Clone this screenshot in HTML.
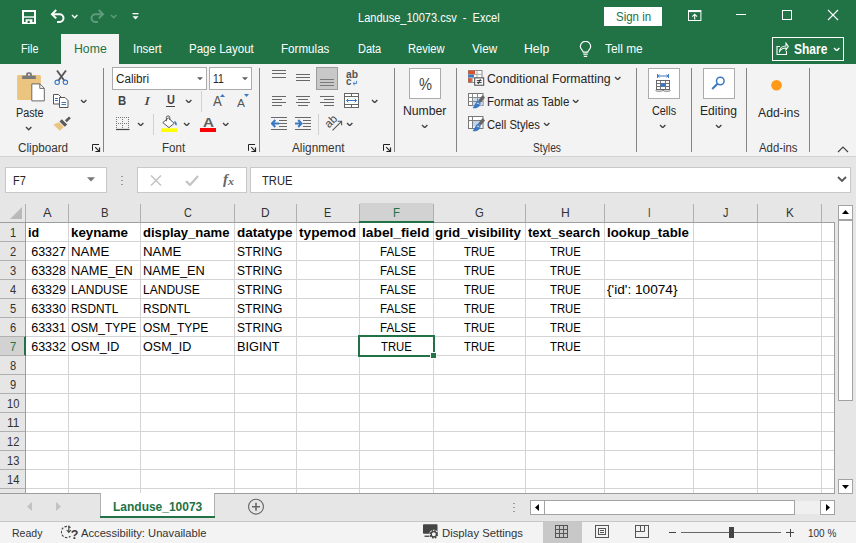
<!DOCTYPE html>
<html lang="en"><head><meta charset="utf-8"><title>Landuse_10073.csv - Excel</title>
<style>
html,body{margin:0;padding:0}
body{width:856px;height:543px;overflow:hidden;position:relative;background:#e6e6e6;font-family:"Liberation Sans",sans-serif}
#app{position:absolute;left:0;top:0;width:856px;height:543px;overflow:hidden}
#app div,#app svg,#app span{position:absolute;display:block}
#app span{white-space:pre;transform-origin:0 0}
</style></head><body><div id="app">
<div style="left:0px;top:0px;width:856px;height:64px;background:#217346;"></div>
<div style="left:61px;top:34px;width:58px;height:30px;background:#f3f3f3;"></div>
<svg style="left:22px;top:10px" width="14" height="14" viewBox="0 0 14 14"><path d="M1 1h12v12h-12z" fill="none" stroke="#fff" stroke-width="2"/><rect x="1" y="6.3" width="12" height="1.4" fill="#fff"/><rect x="3.6" y="9.3" width="6.8" height="3.7" fill="#fff"/><rect x="5.6" y="10.8" width="2.2" height="2.2" fill="#217346"/></svg>
<svg style="left:50px;top:9px" width="16" height="15" viewBox="0 0 16 15"><g fill="none" stroke="#fff" stroke-width="2"><path d="M2 5.2H9.6a3.9 3.9 0 0 1 0 7.8H7"/><path d="M6.2 1L2 5.2L6.2 9.4"/></g></svg>
<svg style="left:70.9px;top:14px" width="7.4" height="4.7" viewBox="0 0 7.4 4.7"><path d="M1 1 L3.7 3.7 L6.4 1" fill="none" stroke="#fff" stroke-width="1.4"/></svg>
<svg style="left:89px;top:9px" width="16" height="15" viewBox="0 0 16 15"><g fill="none" stroke="#5f9c7d" stroke-width="2"><path d="M14 5.2H6.4a3.9 3.9 0 0 0 0 7.8H9"/><path d="M9.8 1L14 5.2L9.8 9.4"/></g></svg>
<svg style="left:109.9px;top:14px" width="7.4" height="4.7" viewBox="0 0 7.4 4.7"><path d="M1 1 L3.7 3.7 L6.4 1" fill="none" stroke="#5f9c7d" stroke-width="1.4"/></svg>
<svg style="left:132px;top:13px" width="7" height="8" viewBox="0 0 7 8"><rect x="0.5" y="0" width="6" height="1.3" fill="#fff"/><path d="M0.5 3.2h6l-3 3.4z" fill="#fff"/></svg>
<div style="left:604px;top:7px;width:58px;height:19px;background:#fff;"></div>
<svg style="left:688px;top:10px" width="14" height="11" viewBox="0 0 14 11"><rect x="0.5" y="0.5" width="12.4" height="10" fill="none" stroke="#fff"/><rect x="0.5" y="0.5" width="12.4" height="1.6" fill="#fff"/><path d="M6.7 9.5V4.5M4.3 6.6L6.7 4.2L9.1 6.6" fill="none" stroke="#fff" stroke-width="1.1"/></svg>
<div style="left:736px;top:14px;width:10px;height:1px;background:#fff;"></div>
<div style="left:782px;top:10px;width:10px;height:10px;background:transparent;box-sizing:border-box;border:1px solid #fff"></div>
<svg style="left:827px;top:9px" width="12" height="12" viewBox="0 0 12 12"><path d="M1 1L11 11M11 1L1 11" stroke="#fff" stroke-width="1.1" fill="none"/></svg>
<svg style="left:579px;top:41px" width="13" height="17" viewBox="0 0 13 17"><g fill="none" stroke="#fff" stroke-width="1.2"><path d="M4.3 11.2c0-1.6-3-3-3-5.6a5.2 5.2 0 0 1 10.4 0c0 2.6-3 4-3 5.6z"/><path d="M4.3 13.2h4.4M4.8 15.3h3.4"/></g></svg>
<div style="left:772px;top:37px;width:72px;height:24px;background:transparent;box-sizing:border-box;border:1px solid #fff"></div>
<svg style="left:776px;top:42px" width="13" height="13" viewBox="0 0 13 13"><g fill="none" stroke="#fff" stroke-width="1.1"><path d="M4 4.5H1v8h9.5V9"/><path d="M3.5 9.5c0-3 2.5-5.5 6.5-5.5V1.2L12.3 4.5L10 7.8V6C7 6 5 7 3.5 9.5z"/></g></svg>
<svg style="left:832.6999999999999px;top:46.5px" width="7.4" height="4.7" viewBox="0 0 7.4 4.7"><path d="M1 1 L3.7 3.7 L6.4 1" fill="none" stroke="#fff" stroke-width="1.4"/></svg>
<div style="left:0px;top:64px;width:856px;height:92px;background:#f3f3f3;"></div>
<div style="left:0px;top:156px;width:856px;height:1px;background:#d2d2d2;"></div>
<div style="left:103px;top:68px;width:1px;height:84px;background:#858585;"></div>
<div style="left:259px;top:68px;width:1px;height:84px;background:#858585;"></div>
<div style="left:394px;top:68px;width:1px;height:84px;background:#858585;"></div>
<div style="left:456px;top:68px;width:1px;height:84px;background:#858585;"></div>
<div style="left:636px;top:68px;width:1px;height:84px;background:#858585;"></div>
<div style="left:691px;top:68px;width:1px;height:84px;background:#858585;"></div>
<div style="left:746px;top:68px;width:1px;height:84px;background:#858585;"></div>
<div style="left:809px;top:68px;width:1px;height:84px;background:#858585;"></div>
<svg style="left:16px;top:71px" width="31" height="32" viewBox="0 0 31 32"><rect x="1.1" y="4" width="23.8" height="25" rx="1.5" fill="#ebc480"/><rect x="6.2" y="4.7" width="13.6" height="3.3" fill="#7a7a7a"/><path d="M10.1 5V3.2a2 2 0 0 1 2-2h1.8a2 2 0 0 1 2 2V5z" fill="#7a7a7a"/><circle cx="13" cy="3.7" r="1" fill="#eee"/><path d="M15.8 12.9h8l4.5 4.5v12.5h-12.5z" fill="#fff" stroke="#6a6a6a"/><path d="M23.8 12.9v4.5h4.5" fill="none" stroke="#6a6a6a"/></svg>
<svg style="left:24.799999999999997px;top:126.3px" width="7.4" height="4.7" viewBox="0 0 7.4 4.7"><path d="M1 1 L3.7 3.7 L6.4 1" fill="none" stroke="#444" stroke-width="1.4"/></svg>
<svg style="left:53px;top:70px" width="16" height="16" viewBox="0 0 16 16"><g fill="none"><path d="M4 0.5L11.2 10.6M13 0.5L5.4 10.6" stroke="#555" stroke-width="1.8"/><circle cx="4.2" cy="12.3" r="2.2" stroke="#3a78c3" stroke-width="1.1"/><circle cx="12.4" cy="12.3" r="2.2" stroke="#3a78c3" stroke-width="1.1"/></g></svg>
<svg style="left:53px;top:94px" width="16" height="14" viewBox="0 0 16 14"><g fill="#fff" stroke="#555"><path d="M0.5 0.5h5l2.5 2.5v7h-7.5z"/><path d="M6.5 3.5h5.5l3 3v7h-8.5z"/></g><path d="M8.5 8.5h4.5M8.5 10.5h4.5M2 4.5h3M2 6.5h3" stroke="#3a78c3" fill="none"/></svg>
<svg style="left:79.9px;top:98.5px" width="7.4" height="4.7" viewBox="0 0 7.4 4.7"><path d="M1 1 L3.7 3.7 L6.4 1" fill="none" stroke="#444" stroke-width="1.4"/></svg>
<svg style="left:53px;top:116px" width="18" height="15" viewBox="0 0 18 15"><path d="M12 4.2L16 0.5L17.8 2.3L13.8 6.2z" fill="#5a5a5a"/><path d="M8.8 3.2L14.2 8.4L11.8 10.8L6.5 5.6z" fill="#5a5a5a"/><path d="M6 6.3L10.8 11L6.8 14.8L0.3 8.6z" fill="#ebc480"/></svg>
<svg style="left:92px;top:144px" width="9" height="9" viewBox="0 0 9 9"><path d="M0.5 6.8V0.5H7" fill="none" stroke="#222"/><path d="M3.2 3.2L7.3 7.3" fill="none" stroke="#222" stroke-width="1.1"/><path d="M3.4 7.5H7.5V3.4" fill="none" stroke="#222" stroke-width="1.2"/></svg>
<div style="left:112px;top:67px;width:95px;height:23px;background:#fff;box-sizing:border-box;border:1px solid #ababab"></div>
<div style="left:209px;top:67px;width:43px;height:23px;background:#fff;box-sizing:border-box;border:1px solid #ababab"></div>
<svg style="left:197px;top:77px" width="6" height="4" viewBox="0 0 6 4"><path d="M0 0.3h6l-3 3z" fill="#606060"/></svg>
<svg style="left:242px;top:77px" width="6" height="4" viewBox="0 0 6 4"><path d="M0 0.3h6l-3 3z" fill="#606060"/></svg>
<div style="left:166px;top:106px;width:9px;height:1px;background:#444;"></div>
<svg style="left:185.1px;top:98.6px" width="7.4" height="4.7" viewBox="0 0 7.4 4.7"><path d="M1 1 L3.7 3.7 L6.4 1" fill="none" stroke="#444" stroke-width="1.4"/></svg>
<div style="left:201px;top:91px;width:1px;height:21px;background:#d0d0d0;"></div>
<svg style="left:116px;top:117px" width="14" height="14" viewBox="0 0 14 14"><g stroke="#777" stroke-dasharray="1 1" fill="none"><path d="M0.5 0V13M6.5 0V13M12.5 0V13M0 0.5H13M0 6.5H13"/></g><path d="M0 12.5H13.5" stroke="#444" stroke-width="1.2"/></svg>
<svg style="left:136.8px;top:121.7px" width="7.4" height="4.7" viewBox="0 0 7.4 4.7"><path d="M1 1 L3.7 3.7 L6.4 1" fill="none" stroke="#444" stroke-width="1.4"/></svg>
<div style="left:153px;top:114px;width:1px;height:21px;background:#d0d0d0;"></div>
<svg style="left:161px;top:115px" width="17" height="18" viewBox="0 0 17 18"><path d="M7.4 3L13.2 8.4L8 12.6L1.8 7.6z" fill="#fff" stroke="#555"/><path d="M5.4 6.2V2.6a1.7 1.7 0 0 1 3.4 0V5" fill="none" stroke="#555"/><path d="M13.4 5.8c2.4 1.2 3 3.4 1.8 5c-1.2-1-2-2.8-1.8-5z" fill="#3a78c3"/><rect x="0" y="13.3" width="16" height="3.7" fill="#ffff00"/></svg>
<svg style="left:182.9px;top:121.7px" width="7.4" height="4.7" viewBox="0 0 7.4 4.7"><path d="M1 1 L3.7 3.7 L6.4 1" fill="none" stroke="#444" stroke-width="1.4"/></svg>
<div style="left:200px;top:128px;width:16px;height:4px;background:#ff0000;"></div>
<svg style="left:222.20000000000002px;top:121.7px" width="7.4" height="4.7" viewBox="0 0 7.4 4.7"><path d="M1 1 L3.7 3.7 L6.4 1" fill="none" stroke="#444" stroke-width="1.4"/></svg>
<svg style="left:220px;top:94px" width="5" height="3" viewBox="0 0 5 3"><path d="M0 3h5l-2.5-3z" fill="#3a78c3"/></svg>
<svg style="left:244px;top:94px" width="5" height="3" viewBox="0 0 5 3"><path d="M0 0h5l-2.5 3z" fill="#3a78c3"/></svg>
<svg style="left:248px;top:144px" width="9" height="9" viewBox="0 0 9 9"><path d="M0.5 6.8V0.5H7" fill="none" stroke="#222"/><path d="M3.2 3.2L7.3 7.3" fill="none" stroke="#222" stroke-width="1.1"/><path d="M3.4 7.5H7.5V3.4" fill="none" stroke="#222" stroke-width="1.2"/></svg>
<div style="left:272px;top:70px;width:14px;height:1px;background:#686868;"></div>
<div style="left:272px;top:73px;width:14px;height:1px;background:#686868;"></div>
<div style="left:272px;top:77px;width:14px;height:1px;background:#686868;"></div>
<div style="left:296px;top:74px;width:14px;height:1px;background:#686868;"></div>
<div style="left:296px;top:77px;width:14px;height:1px;background:#686868;"></div>
<div style="left:296px;top:80px;width:14px;height:1px;background:#686868;"></div>
<div style="left:316px;top:67px;width:22px;height:23px;background:#c8c8c8;box-sizing:border-box;border:1px solid #9c9c9c"></div>
<div style="left:320px;top:79px;width:14px;height:1px;background:#7a7a7a;"></div>
<div style="left:320px;top:82px;width:14px;height:1px;background:#7a7a7a;"></div>
<div style="left:320px;top:85px;width:14px;height:1px;background:#7a7a7a;"></div>
<svg style="left:352px;top:80px" width="6" height="6" viewBox="0 0 6 6"><path d="M4.6 0.8V3.5H1.2M2.7 1.9L1 3.5L2.7 5.1" fill="none" stroke="#3a78c3" stroke-width="0.9"/></svg>
<div style="left:272px;top:96px;width:14px;height:1px;background:#686868;"></div>
<div style="left:272px;top:99px;width:10px;height:1px;background:#686868;"></div>
<div style="left:272px;top:102px;width:14px;height:1px;background:#686868;"></div>
<div style="left:272px;top:105px;width:10px;height:1px;background:#686868;"></div>
<div style="left:296.0px;top:96px;width:14px;height:1px;background:#686868;"></div>
<div style="left:298.0px;top:99px;width:10px;height:1px;background:#686868;"></div>
<div style="left:296.0px;top:102px;width:14px;height:1px;background:#686868;"></div>
<div style="left:298.0px;top:105px;width:10px;height:1px;background:#686868;"></div>
<div style="left:320px;top:96px;width:14px;height:1px;background:#686868;"></div>
<div style="left:324px;top:99px;width:10px;height:1px;background:#686868;"></div>
<div style="left:320px;top:102px;width:14px;height:1px;background:#686868;"></div>
<div style="left:324px;top:105px;width:10px;height:1px;background:#686868;"></div>
<svg style="left:344px;top:93px" width="15" height="15" viewBox="0 0 15 15"><rect x="0.5" y="0.5" width="14" height="14" fill="#fff" stroke="#666"/><path d="M0.5 3.5H14.5M0.5 11.5H14.5M7.5 0.5V3.5M7.5 11.5V14.5" stroke="#666" fill="none"/><path d="M2.5 7.5H12.5M4.3 5.7L2.5 7.5L4.3 9.3M10.7 5.7L12.5 7.5L10.7 9.3" stroke="#3a78c3" fill="none"/></svg>
<svg style="left:370.79999999999995px;top:98.6px" width="7.4" height="4.7" viewBox="0 0 7.4 4.7"><path d="M1 1 L3.7 3.7 L6.4 1" fill="none" stroke="#444" stroke-width="1.4"/></svg>
<div style="left:271px;top:117px;width:16px;height:1px;background:#686868;"></div>
<div style="left:279px;top:120px;width:8px;height:1px;background:#686868;"></div>
<div style="left:279px;top:123px;width:8px;height:1px;background:#686868;"></div>
<div style="left:279px;top:126px;width:8px;height:1px;background:#686868;"></div>
<div style="left:271px;top:129px;width:16px;height:1px;background:#686868;"></div>
<svg style="left:271px;top:119px" width="8" height="9" viewBox="0 0 8 9"><path d="M8 4.5H1.5M4.3 1L1 4.5L4.3 8" fill="none" stroke="#3a78c3" stroke-width="2"/></svg>
<div style="left:295px;top:117px;width:16px;height:1px;background:#686868;"></div>
<div style="left:303px;top:120px;width:8px;height:1px;background:#686868;"></div>
<div style="left:303px;top:123px;width:8px;height:1px;background:#686868;"></div>
<div style="left:303px;top:126px;width:8px;height:1px;background:#686868;"></div>
<div style="left:295px;top:129px;width:16px;height:1px;background:#686868;"></div>
<svg style="left:295px;top:119px" width="8" height="9" viewBox="0 0 8 9"><path d="M0 4.5H6M3.2 1L6.5 4.5L3.2 8" fill="none" stroke="#3a78c3" stroke-width="2"/></svg>
<div style="left:318px;top:114px;width:1px;height:21px;background:#d0d0d0;"></div>
<svg style="left:324px;top:113px" width="22" height="22" viewBox="0 0 22 22"><path d="M8.5 17.3L17.3 8.6M13.6 8.3H17.6V12.3" fill="none" stroke="#555" stroke-width="1.1"/><text x="0" y="0" transform="translate(5 15.5) rotate(-45)" font-family="Liberation Sans,sans-serif" font-size="11.5" fill="#444">ab</text></svg>
<svg style="left:346.0px;top:121.7px" width="7.4" height="4.7" viewBox="0 0 7.4 4.7"><path d="M1 1 L3.7 3.7 L6.4 1" fill="none" stroke="#444" stroke-width="1.4"/></svg>
<svg style="left:383px;top:144px" width="9" height="9" viewBox="0 0 9 9"><path d="M0.5 6.8V0.5H7" fill="none" stroke="#222"/><path d="M3.2 3.2L7.3 7.3" fill="none" stroke="#222" stroke-width="1.1"/><path d="M3.4 7.5H7.5V3.4" fill="none" stroke="#222" stroke-width="1.2"/></svg>
<div style="left:409px;top:68px;width:32px;height:31px;background:#fff;box-sizing:border-box;border:1px solid #ababab"></div>
<svg style="left:420.7px;top:123.8px" width="7.4" height="4.7" viewBox="0 0 7.4 4.7"><path d="M1 1 L3.7 3.7 L6.4 1" fill="none" stroke="#444" stroke-width="1.4"/></svg>
<svg style="left:468px;top:70px" width="17" height="17" viewBox="0 0 17 17"><rect x="0.5" y="0.5" width="13.5" height="12" fill="#fff" stroke="#8a8a8a"/><path d="M0.5 4.4H14M0.5 8H14M4.3 0.5V12.5M9 0.5V12.5" stroke="#a8a8a8" fill="none"/><rect x="0.4" y="0.6" width="6.6" height="3.4" fill="#d9532c"/><rect x="0.4" y="4.7" width="5.6" height="2.7" fill="#3a78c3"/><rect x="0.4" y="8.2" width="3.4" height="3.9" fill="#d9532c"/><rect x="6.7" y="7.9" width="9" height="7.3" fill="#fff" stroke="#444"/><path d="M8.8 10.6h4.8M8.8 12.6h4.8M12.4 9.2L10 14" stroke="#222" stroke-width="0.9" fill="none"/></svg>
<svg style="left:468px;top:93px" width="18" height="17" viewBox="0 0 18 17"><rect x="0.5" y="0.5" width="14.5" height="12" fill="#fff" stroke="#777"/><rect x="5" y="5" width="9.5" height="7.5" fill="#c9dcf2"/><path d="M0.5 4.5H14.5M0.5 8.5H14.5M4.5 0.5V12.5M9.5 0.5V12.5" stroke="#8a8a8a" fill="none"/><path d="M14.6 2L17 4.4L12.6 9.8L10.2 7.4z" fill="#666"/><path d="M10.4 7.8c-2.6 0.4-3.2 3.6-5.8 7.2c3.4 0.8 7.6-0.6 8-4.8z" fill="#3a78c3"/><path d="M8.8 10.6c1.2-0.8 2.2-0.3 2.4 0.8" stroke="#fff" stroke-width="0.9" fill="none"/></svg>
<svg style="left:468px;top:116px" width="18" height="17" viewBox="0 0 18 17"><rect x="0.5" y="0.5" width="14.5" height="12" fill="#fff" stroke="#777"/><rect x="5" y="5" width="7.5" height="5.5" fill="#bfd5ee"/><path d="M0.5 4.5H14.5M4.5 0.5V12.5" stroke="#7d7d7d" fill="none"/><path d="M14.6 2L17 4.4L12.6 9.8L10.2 7.4z" fill="#666"/><path d="M10.4 7.8c-2.6 0.4-3.2 3.6-5.8 7.2c3.4 0.8 7.6-0.6 8-4.8z" fill="#3a78c3"/><path d="M8.8 10.6c1.2-0.8 2.2-0.3 2.4 0.8" stroke="#fff" stroke-width="0.9" fill="none"/></svg>
<svg style="left:613.9px;top:75.5px" width="7.4" height="4.7" viewBox="0 0 7.4 4.7"><path d="M1 1 L3.7 3.7 L6.4 1" fill="none" stroke="#444" stroke-width="1.4"/></svg>
<svg style="left:571.8px;top:98.5px" width="7.4" height="4.7" viewBox="0 0 7.4 4.7"><path d="M1 1 L3.7 3.7 L6.4 1" fill="none" stroke="#444" stroke-width="1.4"/></svg>
<svg style="left:543.1999999999999px;top:121.5px" width="7.4" height="4.7" viewBox="0 0 7.4 4.7"><path d="M1 1 L3.7 3.7 L6.4 1" fill="none" stroke="#444" stroke-width="1.4"/></svg>
<div style="left:648px;top:68px;width:32px;height:31px;background:#fff;box-sizing:border-box;border:1px solid #ababab"></div>
<svg style="left:655px;top:74px" width="17" height="18" viewBox="0 0 17 18"><path d="M2.5 0V4M13.5 0V4M2.5 2H13.5M4.3 0.5L2.8 2L4.3 3.5M11.7 0.5L13.2 2L11.7 3.5" stroke="#3a78c3" fill="none"/><rect x="1.5" y="6.5" width="13" height="9" fill="#fff" stroke="#666"/><path d="M1.5 9.5H14.5M1.5 12.5H14.5M5.5 6.5V15.5M10.5 6.5V15.5" stroke="#777" fill="none"/><rect x="5.5" y="9.5" width="5" height="3" fill="#3a78c3"/><path d="M0.5 16.5c1 1 6 1 7.5 0c1.5 1 6.5 1 7.5 0" stroke="#777" fill="none"/></svg>
<svg style="left:659.1999999999999px;top:123.8px" width="7.4" height="4.7" viewBox="0 0 7.4 4.7"><path d="M1 1 L3.7 3.7 L6.4 1" fill="none" stroke="#444" stroke-width="1.4"/></svg>
<div style="left:703px;top:68px;width:32px;height:31px;background:#fff;box-sizing:border-box;border:1px solid #ababab"></div>
<svg style="left:711px;top:76px" width="15" height="14" viewBox="0 0 15 14"><circle cx="9.3" cy="5" r="3.8" fill="none" stroke="#3a78c3" stroke-width="1.5"/><path d="M6.5 7.8L1.2 13" stroke="#3a78c3" stroke-width="2" fill="none"/></svg>
<svg style="left:714.6999999999999px;top:123.8px" width="7.4" height="4.7" viewBox="0 0 7.4 4.7"><path d="M1 1 L3.7 3.7 L6.4 1" fill="none" stroke="#444" stroke-width="1.4"/></svg>
<svg style="left:770px;top:79px" width="13" height="13" viewBox="0 0 13 13"><circle cx="6.5" cy="6.3" r="5.3" fill="#ff9a17"/></svg>
<svg style="left:837px;top:146px" width="12" height="7" viewBox="0 0 12 7"><path d="M1 6L6 1L11 6" fill="none" stroke="#444" stroke-width="1.2"/></svg>
<div style="left:5px;top:167px;width:102px;height:26px;background:#fff;box-sizing:border-box;border:1px solid #c8c8c8"></div>
<svg style="left:87px;top:177px" width="8" height="5" viewBox="0 0 8 5"><path d="M0 0.3h8l-4 4.2z" fill="#777"/></svg>
<div style="left:121px;top:176px;width:2px;height:1px;background:#9a9a9a;"></div>
<div style="left:121px;top:180px;width:2px;height:1px;background:#9a9a9a;"></div>
<div style="left:121px;top:184px;width:2px;height:1px;background:#9a9a9a;"></div>
<div style="left:137px;top:167px;width:110px;height:26px;background:#fff;box-sizing:border-box;border:1px solid #c8c8c8"></div>
<svg style="left:150px;top:175px" width="12" height="11" viewBox="0 0 12 11"><path d="M1 0.5L11 10.5M11 0.5L1 10.5" stroke="#c4c4c4" stroke-width="1.5" fill="none"/></svg>
<svg style="left:185px;top:175px" width="14" height="11" viewBox="0 0 14 11"><path d="M1 6L5 10L13 1" stroke="#c4c4c4" stroke-width="2.2" fill="none"/></svg>
<div style="left:250px;top:167px;width:601px;height:26px;background:#fff;box-sizing:border-box;border:1px solid #c8c8c8"></div>
<svg style="left:837px;top:176px" width="10" height="7" viewBox="0 0 10 7"><path d="M1 1L5 5L9 1" fill="none" stroke="#555" stroke-width="1.8"/></svg>
<div style="left:26px;top:223px;width:808px;height:270px;background:#fff;"></div>
<div style="left:360px;top:203px;width:73px;height:19px;background:#d2d2d2;"></div>
<div style="left:359px;top:221px;width:75px;height:2px;background:#217346;"></div>
<div style="left:0px;top:337px;width:25px;height:18px;background:#d2d2d2;"></div>
<div style="left:24px;top:336px;width:2px;height:20px;background:#217346;"></div>
<div style="left:25px;top:204px;width:1px;height:18px;background:#b0b0b0;"></div>
<div style="left:68px;top:204px;width:1px;height:18px;background:#b0b0b0;"></div>
<div style="left:140px;top:204px;width:1px;height:18px;background:#b0b0b0;"></div>
<div style="left:234px;top:204px;width:1px;height:18px;background:#b0b0b0;"></div>
<div style="left:296px;top:204px;width:1px;height:18px;background:#b0b0b0;"></div>
<div style="left:359px;top:204px;width:1px;height:18px;background:#b0b0b0;"></div>
<div style="left:433px;top:204px;width:1px;height:18px;background:#b0b0b0;"></div>
<div style="left:525px;top:204px;width:1px;height:18px;background:#b0b0b0;"></div>
<div style="left:604px;top:204px;width:1px;height:18px;background:#b0b0b0;"></div>
<div style="left:693px;top:204px;width:1px;height:18px;background:#b0b0b0;"></div>
<div style="left:757px;top:204px;width:1px;height:18px;background:#b0b0b0;"></div>
<div style="left:821px;top:204px;width:1px;height:18px;background:#b0b0b0;"></div>
<div style="left:0px;top:222px;width:835px;height:1px;background:#9e9e9e;"></div>
<div style="left:25px;top:222px;width:1px;height:271px;background:#9e9e9e;"></div>
<div style="left:359px;top:221px;width:75px;height:2px;background:#217346;"></div>
<div style="left:24px;top:336px;width:2px;height:20px;background:#217346;"></div>
<div style="left:68px;top:223px;width:1px;height:270px;background:#d4d4d4;"></div>
<div style="left:140px;top:223px;width:1px;height:270px;background:#d4d4d4;"></div>
<div style="left:234px;top:223px;width:1px;height:270px;background:#d4d4d4;"></div>
<div style="left:296px;top:223px;width:1px;height:270px;background:#d4d4d4;"></div>
<div style="left:359px;top:223px;width:1px;height:270px;background:#d4d4d4;"></div>
<div style="left:433px;top:223px;width:1px;height:270px;background:#d4d4d4;"></div>
<div style="left:525px;top:223px;width:1px;height:270px;background:#d4d4d4;"></div>
<div style="left:604px;top:223px;width:1px;height:270px;background:#d4d4d4;"></div>
<div style="left:693px;top:223px;width:1px;height:270px;background:#d4d4d4;"></div>
<div style="left:757px;top:223px;width:1px;height:270px;background:#d4d4d4;"></div>
<div style="left:821px;top:223px;width:1px;height:270px;background:#d4d4d4;"></div>
<div style="left:26px;top:241px;width:808px;height:1px;background:#d4d4d4;"></div>
<div style="left:0px;top:241px;width:25px;height:1px;background:#b0b0b0;"></div>
<div style="left:26px;top:260px;width:808px;height:1px;background:#d4d4d4;"></div>
<div style="left:0px;top:260px;width:25px;height:1px;background:#b0b0b0;"></div>
<div style="left:26px;top:279px;width:808px;height:1px;background:#d4d4d4;"></div>
<div style="left:0px;top:279px;width:25px;height:1px;background:#b0b0b0;"></div>
<div style="left:26px;top:298px;width:808px;height:1px;background:#d4d4d4;"></div>
<div style="left:0px;top:298px;width:25px;height:1px;background:#b0b0b0;"></div>
<div style="left:26px;top:317px;width:808px;height:1px;background:#d4d4d4;"></div>
<div style="left:0px;top:317px;width:25px;height:1px;background:#b0b0b0;"></div>
<div style="left:26px;top:336px;width:808px;height:1px;background:#d4d4d4;"></div>
<div style="left:0px;top:336px;width:25px;height:1px;background:#b0b0b0;"></div>
<div style="left:26px;top:355px;width:808px;height:1px;background:#d4d4d4;"></div>
<div style="left:0px;top:355px;width:25px;height:1px;background:#b0b0b0;"></div>
<div style="left:26px;top:374px;width:808px;height:1px;background:#d4d4d4;"></div>
<div style="left:0px;top:374px;width:25px;height:1px;background:#b0b0b0;"></div>
<div style="left:26px;top:393px;width:808px;height:1px;background:#d4d4d4;"></div>
<div style="left:0px;top:393px;width:25px;height:1px;background:#b0b0b0;"></div>
<div style="left:26px;top:412px;width:808px;height:1px;background:#d4d4d4;"></div>
<div style="left:0px;top:412px;width:25px;height:1px;background:#b0b0b0;"></div>
<div style="left:26px;top:431px;width:808px;height:1px;background:#d4d4d4;"></div>
<div style="left:0px;top:431px;width:25px;height:1px;background:#b0b0b0;"></div>
<div style="left:26px;top:450px;width:808px;height:1px;background:#d4d4d4;"></div>
<div style="left:0px;top:450px;width:25px;height:1px;background:#b0b0b0;"></div>
<div style="left:26px;top:469px;width:808px;height:1px;background:#d4d4d4;"></div>
<div style="left:0px;top:469px;width:25px;height:1px;background:#b0b0b0;"></div>
<div style="left:26px;top:488px;width:808px;height:1px;background:#d4d4d4;"></div>
<div style="left:0px;top:488px;width:25px;height:1px;background:#b0b0b0;"></div>
<div style="left:834px;top:222px;width:1px;height:272px;background:#9e9e9e;"></div>
<div style="left:0px;top:493px;width:835px;height:1px;background:#9e9e9e;"></div>
<svg style="left:10px;top:207px" width="12" height="12" viewBox="0 0 12 12"><path d="M12 0V12H0z" fill="#b9b9b9"/></svg>
<div style="left:358px;top:335px;width:77px;height:22px;background:transparent;box-sizing:border-box;border:2px solid #217346"></div>
<div style="left:430px;top:352px;width:7px;height:7px;background:#fff;"></div>
<div style="left:431px;top:353px;width:5px;height:5px;background:#217346;"></div>
<div style="left:838px;top:205px;width:15px;height:15px;background:#fff;box-sizing:border-box;border:1px solid #a3a3a3"></div>
<svg style="left:842px;top:210px" width="7" height="4" viewBox="0 0 7 4"><path d="M0 4h7l-3.5-4z" fill="#000"/></svg>
<div style="left:838px;top:220px;width:15px;height:181px;background:#fff;box-sizing:border-box;border:1px solid #a3a3a3"></div>
<div style="left:838px;top:479px;width:15px;height:15px;background:#fff;box-sizing:border-box;border:1px solid #a3a3a3"></div>
<svg style="left:842px;top:485px" width="7" height="4" viewBox="0 0 7 4"><path d="M0 0h7l-3.5 4z" fill="#000"/></svg>
<svg style="left:27px;top:502px" width="5" height="9" viewBox="0 0 5 9"><path d="M5 0V9L0 4.5z" fill="#c2c2c2"/></svg>
<svg style="left:56px;top:502px" width="5" height="9" viewBox="0 0 5 9"><path d="M0 0V9L5 4.5z" fill="#c2c2c2"/></svg>
<div style="left:101px;top:493px;width:114px;height:23px;background:#fff;"></div>
<div style="left:100px;top:493px;width:1px;height:24px;background:#b0b0b0;"></div>
<div style="left:214px;top:493px;width:1px;height:24px;background:#b0b0b0;"></div>
<div style="left:100px;top:516px;width:115px;height:2px;background:#217346;"></div>
<svg style="left:247px;top:498px" width="18" height="18" viewBox="0 0 18 18"><circle cx="9" cy="8.7" r="7.4" fill="none" stroke="#666" stroke-width="1.1"/><path d="M5 8.7H13M9 4.7V12.7" stroke="#666" stroke-width="1.6" fill="none"/></svg>
<div style="left:513px;top:503px;width:2px;height:1px;background:#9a9a9a;"></div>
<div style="left:513px;top:507px;width:2px;height:1px;background:#9a9a9a;"></div>
<div style="left:513px;top:511px;width:2px;height:1px;background:#9a9a9a;"></div>
<div style="left:530px;top:500px;width:15px;height:15px;background:#fff;box-sizing:border-box;border:1px solid #a3a3a3"></div>
<svg style="left:535px;top:504px" width="4" height="7" viewBox="0 0 4 7"><path d="M4 0V7L0 3.5z" fill="#000"/></svg>
<div style="left:544px;top:500px;width:251px;height:15px;background:#fff;box-sizing:border-box;border:1px solid #a3a3a3"></div>
<div style="left:795px;top:501px;width:25px;height:13px;background:#f0f0f0;"></div>
<div style="left:820px;top:500px;width:15px;height:15px;background:#fff;box-sizing:border-box;border:1px solid #a3a3a3"></div>
<svg style="left:826px;top:504px" width="4" height="7" viewBox="0 0 4 7"><path d="M0 0V7L4 3.5z" fill="#000"/></svg>
<div style="left:0px;top:521px;width:856px;height:1px;background:#c6c6c6;"></div>
<div style="left:0px;top:522px;width:856px;height:21px;background:#f3f3f3;"></div>
<svg style="left:61px;top:524px" width="19" height="18" viewBox="0 0 19 18"><path d="M9.5 3.7A5.6 5.6 0 1 0 9.5 12.3" fill="none" stroke="#444" stroke-dasharray="2.3 1.5" stroke-width="1.2"/><path d="M7.8 1.4V8.2M5.7 6L7.8 8.4L9.9 6" fill="none" stroke="#444" stroke-width="1.1"/><text x="9.8" y="15.3" font-family="Liberation Sans,sans-serif" font-size="12.5" font-weight="700" fill="#3a3a3a">?</text></svg>
<svg style="left:423px;top:524px" width="16" height="16" viewBox="0 0 16 16"><rect x="0" y="0.3" width="14.5" height="9.5" rx="0.8" fill="#444"/><rect x="1.5" y="11.6" width="5" height="1.3" fill="#444"/><circle cx="10.8" cy="10.3" r="4.6" fill="#f3f3f3"/><circle cx="10.8" cy="10.3" r="3.4" fill="none" stroke="#444" stroke-width="1.8" stroke-dasharray="1.6 1.070"/><circle cx="10.8" cy="10.3" r="2.6" fill="none" stroke="#444" stroke-width="1.3"/></svg>
<div style="left:543px;top:522px;width:39px;height:21px;background:#c8c8c8;"></div>
<svg style="left:555px;top:525px" width="13" height="13" viewBox="0 0 13 13"><rect x="0.5" y="0.5" width="12" height="12" fill="none" stroke="#555"/><path d="M0.5 4.5H12.5M0.5 8.5H12.5M4.5 0.5V12.5M8.5 0.5V12.5" stroke="#555" fill="none"/></svg>
<svg style="left:595px;top:525px" width="14" height="13" viewBox="0 0 14 13"><rect x="0.5" y="0.5" width="13" height="12" fill="none" stroke="#555"/><rect x="3.5" y="3.5" width="7" height="6" fill="none" stroke="#555"/><path d="M5 5.5h4M5 7.5h4" stroke="#555"/></svg>
<svg style="left:635px;top:525px" width="14" height="13" viewBox="0 0 14 13"><rect x="0.5" y="0.5" width="13" height="12" fill="none" stroke="#555"/><path d="M5.5 0.5V6.5H0.5M9.5 0.5V6.5H5.5" stroke="#555" fill="none"/></svg>
<div style="left:669px;top:532px;width:7px;height:1px;background:#444;"></div>
<div style="left:681px;top:532px;width:100px;height:1px;background:#666;"></div>
<div style="left:729px;top:527px;width:5px;height:11px;background:#444;"></div>
<div style="left:786px;top:532px;width:8px;height:1px;background:#444;"></div>
<div style="left:789.5px;top:528.5px;width:1px;height:8px;background:#444;"></div>
<span style="left:358px;top:12px;font-size:12px;line-height:12px;color:#fff;transform:scaleX(0.9188);">Landuse_10073.csv  -  Excel</span>
<span style="left:615.5px;top:11px;font-size:12px;line-height:12px;color:#217346;transform:scaleX(0.9563);">Sign in</span>
<span style="left:20.6px;top:43px;font-size:12px;line-height:12px;color:#fff;transform:scaleX(0.8995);">File</span>
<span style="left:73.5px;top:43px;font-size:12px;line-height:12px;color:#217346;transform:scaleX(1.0214);">Home</span>
<span style="left:133.1px;top:43px;font-size:12px;line-height:12px;color:#fff;transform:scaleX(0.9595);">Insert</span>
<span style="left:189.3px;top:43px;font-size:12px;line-height:12px;color:#fff;transform:scaleX(0.9616);">Page Layout</span>
<span style="left:281.3px;top:43px;font-size:12px;line-height:12px;color:#fff;transform:scaleX(0.9677);">Formulas</span>
<span style="left:357.5px;top:43px;font-size:12px;line-height:12px;color:#fff;transform:scaleX(0.9148);">Data</span>
<span style="left:408px;top:43px;font-size:12px;line-height:12px;color:#fff;transform:scaleX(0.9299);">Review</span>
<span style="left:471.8px;top:43px;font-size:12px;line-height:12px;color:#fff;transform:scaleX(0.9769);">View</span>
<span style="left:524.1px;top:43px;font-size:12px;line-height:12px;color:#fff;transform:scaleX(1.0208);">Help</span>
<span style="left:605.2px;top:43px;font-size:12px;line-height:12px;color:#fff;transform:scaleX(0.9917);">Tell me</span>
<span style="left:793.5px;top:42px;font-size:14px;line-height:14px;color:#fff;font-weight:700;transform:scaleX(0.8556);">Share</span>
<span style="left:15.7px;top:107px;font-size:12px;line-height:12px;color:#262626;transform:scaleX(0.8994);">Paste</span>
<span style="left:18.4px;top:142px;font-size:12px;line-height:12px;color:#333;transform:scaleX(0.9752);">Clipboard</span>
<span style="left:115.7px;top:73px;font-size:12px;line-height:12px;color:#262626;transform:scaleX(0.9731);">Calibri</span>
<span style="left:212.5px;top:73px;font-size:12px;line-height:12px;color:#262626;transform:scaleX(0.8581);">11</span>
<span style="left:118.4px;top:94px;font-size:13px;line-height:13px;color:#444;font-weight:700;transform:scaleX(0.8732);">B</span>
<span style="left:143.8px;top:94px;font-size:13.5px;line-height:13.5px;color:#444;font-style:italic;font-family:'Liberation Serif',serif;transform:scaleX(1.3333);">I</span>
<span style="left:166.7px;top:94px;font-size:12px;line-height:12px;color:#444;font-weight:700;transform:scaleX(0.9110);">U</span>
<span style="left:203.2px;top:116px;font-size:13.5px;line-height:13.5px;color:#606060;font-weight:700;transform:scaleX(1.1282);">A</span>
<span style="left:212.6px;top:94px;font-size:14.5px;line-height:14.5px;color:#555;transform:scaleX(0.9099);">A</span>
<span style="left:237px;top:98px;font-size:10.5px;line-height:10.5px;color:#555;transform:scaleX(1.1403);">A</span>
<span style="left:161.7px;top:142px;font-size:12px;line-height:12px;color:#333;transform:scaleX(0.9619);">Font</span>
<span style="left:345.6px;top:69px;font-size:11px;line-height:11px;color:#555;font-weight:700;transform:scaleX(0.9343);">ab</span>
<span style="left:345.6px;top:76px;font-size:11px;line-height:11px;color:#555;font-weight:700;transform:scaleX(0.8816);">c</span>
<span style="left:292.2px;top:142px;font-size:12px;line-height:12px;color:#333;transform:scaleX(0.9836);">Alignment</span>
<span style="left:418.8px;top:76px;font-size:16.5px;line-height:16.5px;color:#444;transform:scaleX(0.8860);">%</span>
<span style="left:403.3px;top:105px;font-size:12px;line-height:12px;color:#262626;transform:scaleX(1.0167);">Number</span>
<span style="left:486.7px;top:73px;font-size:12px;line-height:12px;color:#262626;transform:scaleX(1.0237);">Conditional Formatting</span>
<span style="left:486.7px;top:96px;font-size:12px;line-height:12px;color:#262626;transform:scaleX(0.9589);">Format as Table</span>
<span style="left:486.7px;top:119px;font-size:12px;line-height:12px;color:#262626;transform:scaleX(0.9332);">Cell Styles</span>
<span style="left:532.6px;top:142px;font-size:12px;line-height:12px;color:#333;transform:scaleX(0.8566);">Styles</span>
<span style="left:651.6px;top:105px;font-size:12px;line-height:12px;color:#262626;transform:scaleX(0.9036);">Cells</span>
<span style="left:700px;top:105px;font-size:12px;line-height:12px;color:#262626;transform:scaleX(1.0054);">Editing</span>
<span style="left:757.5px;top:107px;font-size:12px;line-height:12px;color:#262626;transform:scaleX(1.0200);">Add-ins</span>
<span style="left:758.6px;top:142px;font-size:12px;line-height:12px;color:#333;transform:scaleX(0.9462);">Add-ins</span>
<span style="left:12.5px;top:175px;font-size:12px;line-height:12px;color:#262626;transform:scaleX(0.9133);">F7</span>
<span style="left:223px;top:173px;font-size:14px;line-height:14px;color:#666;font-weight:700;font-style:italic;font-family:'Liberation Serif',serif;transform:scaleX(1.0702);">f</span>
<span style="left:227.6px;top:177px;font-size:10px;line-height:10px;color:#666;font-weight:700;font-style:italic;font-family:'Liberation Serif',serif;transform:scaleX(1.2000);">x</span>
<span style="left:262.4px;top:175px;font-size:12px;line-height:12px;color:#262626;transform:scaleX(0.9305);">TRUE</span>
<span style="left:42.7px;top:207px;font-size:12px;line-height:12px;color:#333;transform:scaleX(1.0729);">A</span>
<span style="left:100.7px;top:207px;font-size:12px;line-height:12px;color:#333;transform:scaleX(0.9481);">B</span>
<span style="left:183.6px;top:207px;font-size:12px;line-height:12px;color:#333;transform:scaleX(0.8995);">C</span>
<span style="left:261.2px;top:207px;font-size:12px;line-height:12px;color:#333;transform:scaleX(0.9917);">D</span>
<span style="left:324.4px;top:207px;font-size:12px;line-height:12px;color:#333;transform:scaleX(0.8982);">E</span>
<span style="left:393.0px;top:207px;font-size:12px;line-height:12px;color:#217346;transform:scaleX(0.9532);">F</span>
<span style="left:475.1px;top:207px;font-size:12px;line-height:12px;color:#333;transform:scaleX(0.9418);">G</span>
<span style="left:560.6px;top:207px;font-size:12px;line-height:12px;color:#333;transform:scaleX(1.0148);">H</span>
<span style="left:647.7px;top:207px;font-size:12px;line-height:12px;color:#333;transform:scaleX(0.7776);">I</span>
<span style="left:722.8px;top:207px;font-size:12px;line-height:12px;color:#333;transform:scaleX(0.9000);">J</span>
<span style="left:785.6px;top:207px;font-size:12px;line-height:12px;color:#333;transform:scaleX(0.9731);">K</span>
<span style="left:9.9px;top:227px;font-size:12.5px;line-height:12.5px;color:#333;transform:scaleX(0.8917);">1</span>
<span style="left:9.9px;top:246px;font-size:12.5px;line-height:12.5px;color:#333;transform:scaleX(0.8917);">2</span>
<span style="left:9.9px;top:265px;font-size:12.5px;line-height:12.5px;color:#333;transform:scaleX(0.8917);">3</span>
<span style="left:9.9px;top:284px;font-size:12.5px;line-height:12.5px;color:#333;transform:scaleX(0.8917);">4</span>
<span style="left:9.9px;top:303px;font-size:12.5px;line-height:12.5px;color:#333;transform:scaleX(0.8917);">5</span>
<span style="left:9.9px;top:322px;font-size:12.5px;line-height:12.5px;color:#333;transform:scaleX(0.8917);">6</span>
<span style="left:9.9px;top:341px;font-size:12.5px;line-height:12.5px;color:#217346;transform:scaleX(0.8917);">7</span>
<span style="left:9.9px;top:360px;font-size:12.5px;line-height:12.5px;color:#333;transform:scaleX(0.8917);">8</span>
<span style="left:9.9px;top:379px;font-size:12.5px;line-height:12.5px;color:#333;transform:scaleX(0.8917);">9</span>
<span style="left:6.8px;top:398px;font-size:12.5px;line-height:12.5px;color:#333;transform:scaleX(0.8917);">10</span>
<span style="left:6.8px;top:417px;font-size:12.5px;line-height:12.5px;color:#333;transform:scaleX(0.9550);">11</span>
<span style="left:6.8px;top:436px;font-size:12.5px;line-height:12.5px;color:#333;transform:scaleX(0.8917);">12</span>
<span style="left:6.8px;top:455px;font-size:12.5px;line-height:12.5px;color:#333;transform:scaleX(0.8917);">13</span>
<span style="left:6.8px;top:474px;font-size:12.5px;line-height:12.5px;color:#333;transform:scaleX(0.8917);">14</span>
<span style="left:28.1px;top:227px;font-size:12.5px;line-height:12.5px;color:#000;font-weight:700;">id</span>
<span style="left:71.0px;top:227px;font-size:12.5px;line-height:12.5px;color:#000;font-weight:700;transform:scaleX(1.0651);">keyname</span>
<span style="left:143.0px;top:227px;font-size:12.5px;line-height:12.5px;color:#000;font-weight:700;transform:scaleX(1.0461);">display_name</span>
<span style="left:236.5px;top:227px;font-size:12.5px;line-height:12.5px;color:#000;font-weight:700;transform:scaleX(1.0796);">datatype</span>
<span style="left:298.5px;top:227px;font-size:12.5px;line-height:12.5px;color:#000;font-weight:700;transform:scaleX(1.0942);">typemod</span>
<span style="left:361.8px;top:227px;font-size:12.5px;line-height:12.5px;color:#000;font-weight:700;transform:scaleX(1.1007);">label_field</span>
<span style="left:435.0px;top:227px;font-size:12.5px;line-height:12.5px;color:#000;font-weight:700;transform:scaleX(1.0646);">grid_visibility</span>
<span style="left:528.1px;top:227px;font-size:12.5px;line-height:12.5px;color:#000;font-weight:700;transform:scaleX(1.0388);">text_search</span>
<span style="left:607.2px;top:227px;font-size:12.5px;line-height:12.5px;color:#000;font-weight:700;transform:scaleX(1.0610);">lookup_table</span>
<span style="left:31.2px;top:246px;font-size:12.5px;line-height:12.5px;color:#000;">63327</span>
<span style="left:31.2px;top:265px;font-size:12.5px;line-height:12.5px;color:#000;">63328</span>
<span style="left:31.2px;top:284px;font-size:12.5px;line-height:12.5px;color:#000;">63329</span>
<span style="left:31.2px;top:303px;font-size:12.5px;line-height:12.5px;color:#000;">63330</span>
<span style="left:31.2px;top:322px;font-size:12.5px;line-height:12.5px;color:#000;">63331</span>
<span style="left:31.2px;top:341px;font-size:12.5px;line-height:12.5px;color:#000;">63332</span>
<span style="left:71px;top:246px;font-size:12.5px;line-height:12.5px;color:#000;transform:scaleX(1.0602);">NAME</span>
<span style="left:143px;top:246px;font-size:12.5px;line-height:12.5px;color:#000;transform:scaleX(1.0602);">NAME</span>
<span style="left:71px;top:265px;font-size:12.5px;line-height:12.5px;color:#000;transform:scaleX(1.0225);">NAME_EN</span>
<span style="left:143px;top:265px;font-size:12.5px;line-height:12.5px;color:#000;transform:scaleX(1.0225);">NAME_EN</span>
<span style="left:71px;top:284px;font-size:12.5px;line-height:12.5px;color:#000;transform:scaleX(0.9619);">LANDUSE</span>
<span style="left:143px;top:284px;font-size:12.5px;line-height:12.5px;color:#000;transform:scaleX(0.9619);">LANDUSE</span>
<span style="left:71px;top:303px;font-size:12.5px;line-height:12.5px;color:#000;transform:scaleX(0.9457);">RSDNTL</span>
<span style="left:143px;top:303px;font-size:12.5px;line-height:12.5px;color:#000;transform:scaleX(0.9457);">RSDNTL</span>
<span style="left:71px;top:322px;font-size:12.5px;line-height:12.5px;color:#000;transform:scaleX(0.9592);">OSM_TYPE</span>
<span style="left:143px;top:322px;font-size:12.5px;line-height:12.5px;color:#000;transform:scaleX(0.9592);">OSM_TYPE</span>
<span style="left:71px;top:341px;font-size:12.5px;line-height:12.5px;color:#000;transform:scaleX(1.0076);">OSM_ID</span>
<span style="left:143px;top:341px;font-size:12.5px;line-height:12.5px;color:#000;transform:scaleX(1.0076);">OSM_ID</span>
<span style="left:236.5px;top:246px;font-size:12.5px;line-height:12.5px;color:#000;transform:scaleX(0.9633);">STRING</span>
<span style="left:236.5px;top:265px;font-size:12.5px;line-height:12.5px;color:#000;transform:scaleX(0.9633);">STRING</span>
<span style="left:236.5px;top:284px;font-size:12.5px;line-height:12.5px;color:#000;transform:scaleX(0.9633);">STRING</span>
<span style="left:236.5px;top:303px;font-size:12.5px;line-height:12.5px;color:#000;transform:scaleX(0.9633);">STRING</span>
<span style="left:236.5px;top:322px;font-size:12.5px;line-height:12.5px;color:#000;transform:scaleX(0.9633);">STRING</span>
<span style="left:236.5px;top:341px;font-size:12.5px;line-height:12.5px;color:#000;transform:scaleX(1.0199);">BIGINT</span>
<span style="left:379.5px;top:246px;font-size:12.5px;line-height:12.5px;color:#000;transform:scaleX(0.9249);">FALSE</span>
<span style="left:379.5px;top:265px;font-size:12.5px;line-height:12.5px;color:#000;transform:scaleX(0.9249);">FALSE</span>
<span style="left:379.5px;top:284px;font-size:12.5px;line-height:12.5px;color:#000;transform:scaleX(0.9249);">FALSE</span>
<span style="left:379.5px;top:303px;font-size:12.5px;line-height:12.5px;color:#000;transform:scaleX(0.9249);">FALSE</span>
<span style="left:379.5px;top:322px;font-size:12.5px;line-height:12.5px;color:#000;transform:scaleX(0.9249);">FALSE</span>
<span style="left:381.2px;top:341px;font-size:12.5px;line-height:12.5px;color:#000;transform:scaleX(0.9051);">TRUE</span>
<span style="left:464.2px;top:246px;font-size:12.5px;line-height:12.5px;color:#000;transform:scaleX(0.9051);">TRUE</span>
<span style="left:550.2px;top:246px;font-size:12.5px;line-height:12.5px;color:#000;transform:scaleX(0.9051);">TRUE</span>
<span style="left:464.2px;top:265px;font-size:12.5px;line-height:12.5px;color:#000;transform:scaleX(0.9051);">TRUE</span>
<span style="left:550.2px;top:265px;font-size:12.5px;line-height:12.5px;color:#000;transform:scaleX(0.9051);">TRUE</span>
<span style="left:464.2px;top:284px;font-size:12.5px;line-height:12.5px;color:#000;transform:scaleX(0.9051);">TRUE</span>
<span style="left:550.2px;top:284px;font-size:12.5px;line-height:12.5px;color:#000;transform:scaleX(0.9051);">TRUE</span>
<span style="left:464.2px;top:303px;font-size:12.5px;line-height:12.5px;color:#000;transform:scaleX(0.9051);">TRUE</span>
<span style="left:550.2px;top:303px;font-size:12.5px;line-height:12.5px;color:#000;transform:scaleX(0.9051);">TRUE</span>
<span style="left:464.2px;top:322px;font-size:12.5px;line-height:12.5px;color:#000;transform:scaleX(0.9051);">TRUE</span>
<span style="left:550.2px;top:322px;font-size:12.5px;line-height:12.5px;color:#000;transform:scaleX(0.9051);">TRUE</span>
<span style="left:464.2px;top:341px;font-size:12.5px;line-height:12.5px;color:#000;transform:scaleX(0.9051);">TRUE</span>
<span style="left:550.2px;top:341px;font-size:12.5px;line-height:12.5px;color:#000;transform:scaleX(0.9051);">TRUE</span>
<span style="left:606.5px;top:284px;font-size:12.5px;line-height:12.5px;color:#000;transform:scaleX(1.0920);">{&#x27;id&#x27;: 10074}</span>
<span style="left:112.9px;top:500px;font-size:13px;line-height:13px;color:#217346;font-weight:700;transform:scaleX(0.9221);">Landuse_10073</span>
<span style="left:11.6px;top:528px;font-size:11.5px;line-height:11.5px;color:#333;transform:scaleX(0.9173);">Ready</span>
<span style="left:80.6px;top:528px;font-size:11.5px;line-height:11.5px;color:#333;transform:scaleX(0.9719);">Accessibility: Unavailable</span>
<span style="left:441.5px;top:528px;font-size:11.5px;line-height:11.5px;color:#333;transform:scaleX(0.9822);">Display Settings</span>
<span style="left:807.7px;top:528px;font-size:11.5px;line-height:11.5px;color:#333;transform:scaleX(0.8678);">100 %</span>
</div></body></html>
